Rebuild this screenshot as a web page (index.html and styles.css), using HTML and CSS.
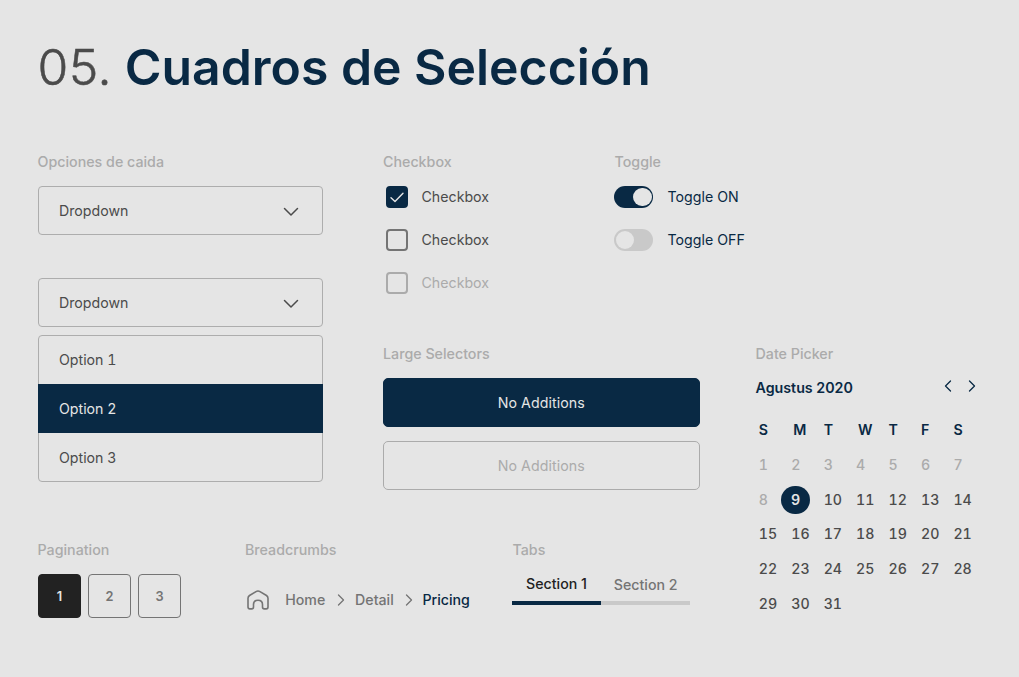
FILE: index.html
```html
<!DOCTYPE html>
<html lang="es">
<head>
<meta charset="utf-8">
<title>Cuadros de Selección</title>
<link rel="stylesheet" href="styles.css">
</head>
<body>
<h1 class="title"><span class="title-number">05.</span> Cuadros de Selección</h1>
<main class="board">
  <div class="components">
    <div class="upper">
      <section class="dropdowns">
        <h2 class="label">Opciones de caida</h2>
        <div class="dropdown"><span>Dropdown</span><svg class="caret" viewBox="0 0 16 10"><path d="M1.5 1.5 8 8l6.500-6.500"/></svg></div>
        <div class="dropdown dropdown-open"><span>Dropdown</span><svg class="caret" viewBox="0 0 16 10"><path d="M1.500 1.500 8 8l6.500-6.500"/></svg></div>
        <ul class="options">
          <li class="option">Option 1</li>
          <li class="option option-active">Option 2</li>
          <li class="option">Option 3</li>
        </ul>
      </section>
      <div class="middle">
        <div class="controls">
          <section class="checks">
            <h2 class="label">Checkbox</h2>
            <div class="check"><span class="box box-on"><svg class="tick" viewBox="0 0 14 11"><path d="M1 5.700 5 9.600 13 1.200"/></svg></span>Checkbox</div>
            <div class="check"><span class="box"></span>Checkbox</div>
            <div class="check check-disabled"><span class="box"></span>Checkbox</div>
          </section>
          <section class="toggles">
            <h2 class="label">Toggle</h2>
            <div class="toggle"><span class="switch switch-on"></span>Toggle ON</div>
            <div class="toggle"><span class="switch"></span>Toggle OFF</div>
          </section>
        </div>
        <section class="selectors">
          <h2 class="label">Large Selectors</h2>
          <div class="selector selector-active">No Additions</div>
          <div class="selector">No Additions</div>
        </section>
      </div>
    </div>
    <div class="lower">
      <section class="pagination">
        <h2 class="label">Pagination</h2>
        <div class="pages"><span class="page page-active">1</span><span class="page">2</span><span class="page">3</span></div>
      </section>
      <section class="breadcrumbs">
        <h2 class="label">Breadcrumbs</h2>
        <nav class="crumbs">
          <svg class="home" viewBox="0 0 22 20"><path d="M1 8.300C1 7 1.500 6.200 2.500 5.500L9 1.600c1.300-.8 2.700-.8 4 0l6.500 3.900c1 .7 1.500 1.500 1.500 2.800V17c0 1.200-.6 1.900-1.800 1.900h-1.900c-1.200 0-1.800-.7-1.800-1.900v-2.500c0-2.600-1.800-4.300-4.500-4.300s-4.500 1.700-4.500 4.300V17c0 1.200-.6 1.900-1.800 1.900H2.800C1.600 18.900 1 18.200 1 17Z"/></svg>
          <span class="crumb">Home</span>
          <svg class="chevron" viewBox="0 0 8 12"><path d="m1.500 1 5 5-5 5"/></svg>
          <span class="crumb">Detail</span>
          <svg class="chevron" viewBox="0 0 8 12"><path d="m1.500 1 5 5-5 5"/></svg>
          <span class="crumb crumb-current">Pricing</span>
        </nav>
      </section>
      <section class="tabs-block">
        <h2 class="label">Tabs</h2>
        <div class="tabs"><span class="tab tab-active">Section 1</span><span class="tab">Section 2</span></div>
      </section>
    </div>
  </div>
  <section class="picker">
    <h2 class="label">Date Picker</h2>
    <div class="month"><span>Agustus 2020</span>
      <span class="arrows"><svg class="arrow" viewBox="0 0 8 12"><path d="m6.500 1-5 5 5 5"/></svg><svg class="arrow" viewBox="0 0 8 12"><path d="m1.500 1 5 5-5 5"/></svg></span>
    </div>
    <div class="calendar">
      <b>S</b><b class="wide">M</b><b>T</b><b class="wide">W</b><b>T</b><b>F</b><b>S</b>
      <i>1</i><i>2</i><i>3</i><i>4</i><i>5</i><i>6</i><i>7</i>
      <i>8</i><span class="selected">9</span><span>10</span><span>11</span><span>12</span><span>13</span><span>14</span>
      <span>15</span><span>16</span><span>17</span><span>18</span><span>19</span><span>20</span><span>21</span>
      <span>22</span><span>23</span><span>24</span><span>25</span><span>26</span><span>27</span><span>28</span>
      <span>29</span><span>30</span><span>31</span>
    </div>
  </section>
</main>
</body>
</html>
```
FILE: styles.css
```css
* { box-sizing: border-box; }
body {
  margin: 0;
  height: 677px;
  padding: 37px 0 0 37.5px;
  overflow: hidden;
  background: #e5e5e5;
  color: #4b4b4b;
  font: 400 14.2px/18px Inter, sans-serif;
}
h1, h2, ul { margin: 0; padding: 0; }
svg { display: block; fill: none; stroke: currentColor; stroke-linecap: round; stroke-linejoin: round; flex: none; }
.title { height: 116px; font-size: 49.9px; line-height: 60px; font-weight: 600; color: #092944; white-space: nowrap; }
.title-number { font-weight: 300; letter-spacing: .5px; color: #4b4b4b; -webkit-text-stroke: .5px #4b4b4b; }
.label { font-size: 14.25px; font-weight: 500; line-height: 18px; color: #ababab; white-space: nowrap; }
.board { display: flex; }
.components { width: 718px; }
.upper { display: flex; height: 388px; }
.dropdowns { width: 285.500px; margin-right: 60px; }
.dropdown {
  display: flex; align-items: center; justify-content: space-between;
  height: 49px; margin-top: 15px; padding: 0 23.500px 0 20.500px;
  border: 1px solid #adadad; border-radius: 4px;
}
.dropdown-open { margin-top: 43px; }
.caret { width: 16px; height: 10px; stroke-width: 1.500; margin-top: 2px; }
.options { margin-top: 8px; height: 147px; border: 1px solid #adadad; border-radius: 4px; list-style: none; }
.option { height: 49px; margin: 0 -1px; padding-left: 21.500px; line-height: 48px; font-variant-numeric: tabular-nums; }
.option-active { background: #092944; color: #e5e5e5; line-height: 49px; margin-top: -1px; }
.option-active + .option { line-height: 49px; }
.controls { display: flex; height: 192px; }
.checks { width: 231px; }
.check, .toggle { display: flex; align-items: center; height: 22px; margin-bottom: 21px; }
.check { padding-left: 2.500px; gap: 14px; }
.label + .check, .label + .toggle { margin-top: 15px; }
.check-disabled { color: #ababab; }
.box { display: grid; place-items: center; width: 22px; height: 22px; border: 2px solid #747474; border-radius: 4px; }
.check-disabled .box { border-color: #ababab; }
.box-on { border-color: #092944; background: #092944; color: #e5e5e5; }
.tick { width: 14px; height: 11px; stroke-width: 1.400; }
.toggles .label { padding-left: .5px; }
.toggle { gap: 14.500px; color: #092944; }
.switch { display: flex; align-items: center; width: 39px; height: 22px; padding: 0 1.500px; border-radius: 11px; background: #c9c9c9; }
.switch::before { content: ""; width: 18.500px; height: 18.500px; border-radius: 50%; background: #e5e5e5; }
.switch-on { justify-content: flex-end; background: #092944; }
.selectors { width: 316.500px; }
.selector { height: 49px; margin-top: 14px; border: 1px solid #ababab; border-radius: 5px; color: #ababab; text-align: center; line-height: 47px; letter-spacing: .07px; }
.selector-active { margin-top: 15px; border-color: #092944; background: #092944; color: #e5e5e5; }
.lower { display: flex; }
.pagination { width: 207.500px; }
.pages { display: flex; gap: 7px; margin-top: 15px; padding-left: .5px; }
.page { width: 43px; height: 44px; border: 1px solid #747474; border-radius: 4px; color: #747474; font-size: 12.800px; font-weight: 600; line-height: 43px; text-align: center; }
.page-active { border-color: #222; background: #222; color: #e5e5e5; }
.breadcrumbs { width: 267.500px; }
.crumbs { display: flex; align-items: center; margin-top: 31px; padding-left: 2px; color: #747474; font-weight: 500; white-space: nowrap; height: 20px; }
.home { width: 22px; height: 20px; stroke-width: 1.600; margin-right: 16.200px; }
.chevron { width: 8px; height: 12px; margin: 0 10.500px 0 11.300px; stroke-width: 1.300; }
.crumb-current { color: #092944; letter-spacing: -.05px; }
.crumb + .chevron ~ .chevron { margin: 0 9.800px 0 11px; }
.tabs { display: flex; margin: 14px 0 0 -.6px; font-weight: 500; }
.tab { width: 89.200px; height: 32px; line-height: 24px; text-align: center; border-bottom: 4px solid #c9c9c9; color: #747474; }
.tab-active { border-color: #092944; color: #222; line-height: 22px; }
.picker { width: 225px; padding-top: 192px; }
.month { display: flex; justify-content: space-between; margin-top: 16px; height: 18px; font-size: 14.250px; font-weight: 600; color: #092944; }
.arrows { display: flex; gap: 16px; padding-right: 5px; }
.arrow { width: 8px; height: 12px; stroke-width: 1.300; margin-top: 1px; }
.calendar { display: grid; grid-template-columns: repeat(7, 32.450px); grid-auto-rows: 34.800px; margin: 16px 0 0 3.300px; line-height: 34px; font-weight: 500; font-variant-numeric: tabular-nums; }
.calendar b { font-weight: 600; color: #092944; }
.calendar i { font-style: normal; color: #ababab; }
.calendar .wide { padding-left: 2px; }
.selected { width: 28.500px; height: 28.500px; margin: 3px 0 0 -10px; border-radius: 50%; background: #092944; color: #e5e5e5; text-align: center; line-height: 28px; font-weight: 600; }
```
